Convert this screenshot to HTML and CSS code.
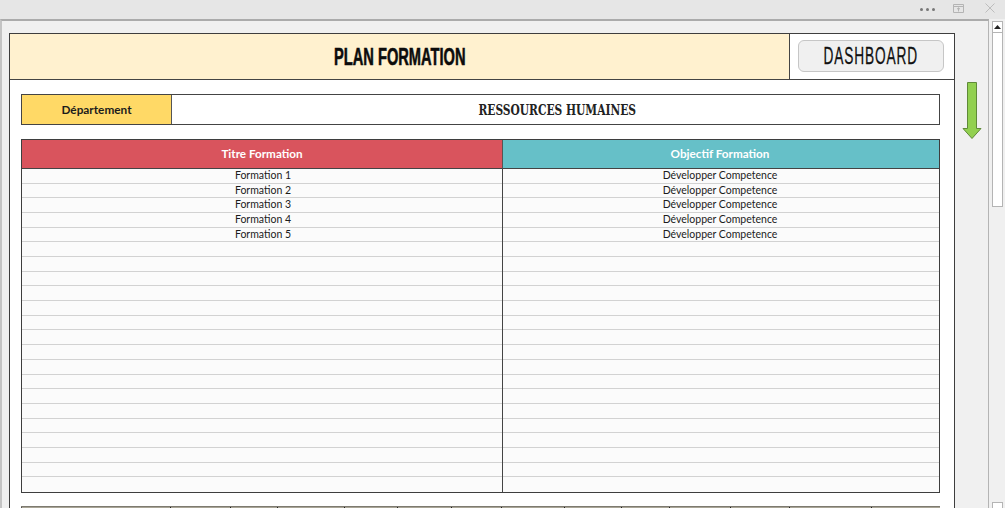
FILE: index.html
```html
<!DOCTYPE html>
<html lang="fr">
<head>
<meta charset="utf-8">
<title>Plan Formation</title>
<link rel="stylesheet" href="styles.css">
</head>
<body>
<header class="titlebar">
  <span class="dots"><i></i><i></i><i></i></span>
  <svg class="win-icon" width="11" height="9" viewBox="0 0 11 9"><path d="M.5.5h10v8H.5zM.5 2.5h10M5.5 7.5V4M4 5.2l1.5-1.4L7 5.2" fill="none" stroke="#b4b4b4"/></svg>
  <svg class="win-close" width="10" height="10" viewBox="0 0 10 10"><path d="M.5.5l9 9M9.5.5l-9 9" fill="none" stroke="#bdbdbd"/></svg>
</header>
<div class="main">
  <div class="pane">
    <section class="sheet">
      <div class="sheet-head">
        <h1 class="sheet-title"><span class="title-text">PLAN FORMATION</span></h1>
        <div class="sheet-action"><button class="dash-btn" type="button"><span class="dash-text">DASHBOARD</span></button></div>
      </div>
      <div class="sheet-body">
        <div class="dept">
          <div class="dept-label">Département</div>
          <div class="dept-value"><span class="dept-text">RESSOURCES HUMAINES</span></div>
        </div>
        <div class="table">
          <div class="th th-red">Titre Formation</div>
          <div class="th th-teal">Objectif Formation</div>
          <div class="col col-left">
            <div class="row">Formation 1</div><div class="row">Formation 2</div><div class="row">Formation 3</div><div class="row">Formation 4</div><div class="row">Formation 5</div>
            <div class="row"></div><div class="row"></div><div class="row"></div><div class="row"></div><div class="row"></div><div class="row"></div><div class="row"></div><div class="row"></div><div class="row"></div><div class="row"></div><div class="row"></div><div class="row"></div><div class="row"></div><div class="row"></div><div class="row"></div><div class="row"></div><div class="row"></div>
          </div>
          <div class="col col-right">
            <div class="row">Développer Competence</div><div class="row">Développer Competence</div><div class="row">Développer Competence</div><div class="row">Développer Competence</div><div class="row">Développer Competence</div>
            <div class="row"></div><div class="row"></div><div class="row"></div><div class="row"></div><div class="row"></div><div class="row"></div><div class="row"></div><div class="row"></div><div class="row"></div><div class="row"></div><div class="row"></div><div class="row"></div><div class="row"></div><div class="row"></div><div class="row"></div><div class="row"></div><div class="row"></div>
          </div>
        </div>
        <div class="next-table">
          <i></i><i></i><i></i><i></i><i></i><i></i><i></i><i></i><i></i><i></i><i></i><i></i><i></i><i></i>
        </div>
      </div>
    </section>
    <div class="gutter">
      <svg class="arrow" width="20" height="58" viewBox="0 0 20 58"><path d="M5.5.5h9v46h4.5L10 56.5 1 46.5h4.5z" fill="#92d050" stroke="#5f8a38"/></svg>
    </div>
  </div>
  <aside class="scrollbar">
    <div class="sb-btn"><svg width="7" height="4" viewBox="0 0 7 4"><path d="M3.5 0L7 4H0z" fill="#222"/></svg></div>
    <div class="sb-thumb"></div>
    <div class="sb-track"></div>
    <div class="sb-btn sb-btn-end"></div>
  </aside>
</div>
</body>
</html>
```
FILE: styles.css
```css
* { box-sizing: border-box; }
html, body { margin: 0; height: 508px; overflow: hidden; }
body { width: 1005px; display: flex; flex-direction: column; background: #f0f0f0; font-family: Lato, "Open Sans", sans-serif; color: #1c1c1c; }

.titlebar { height: 19px; flex: none; background: #e6e6e6; display: flex; align-items: flex-start; }
.dots { display: flex; gap: 3px; margin: 8px 0 0 920px; }
.dots i { width: 3px; height: 3px; border-radius: 50%; background: #777; }
.win-icon { margin: 4px 0 0 18px; }
.win-close { margin: 3px 0 0 21px; }

.main { flex: 1; min-height: 0; display: flex; }
.pane { width: 989px; flex: none; display: flex; align-items: flex-start; border-top: 2px solid #ababab; border-left: 2px solid #c4c4c4; border-right: 1px solid #b4b4b4; padding: 12px 0 0 7px; background: #f0f0f0; }

.sheet { width: 946px; flex: none; background: #fff; border: 1px solid #3e3e3e; border-bottom: 0; }
.sheet-head { height: 46px; display: flex; border-bottom: 1px solid #444; }
.sheet-title { flex: 1; margin: 0; background: #fff1cf; border-right: 1px solid #444; text-align: center; font: bold 24px/46px "Liberation Sans", sans-serif; color: #0c0c0c; }
.title-text { display: inline-block; transform: scaleX(.61); -webkit-text-stroke: .6px #0c0c0c; white-space: nowrap; }
.sheet-action { width: 164px; flex: none; padding: 6px 10px 7px 8px; }
.dash-btn { width: 100%; height: 100%; padding: 0; display: flex; align-items: center; justify-content: center; background: #f0f0f0; border: 1px solid #c6c6c6; border-radius: 6px; font: 24px/1 "Liberation Sans", sans-serif; letter-spacing: 1.5px; color: #111; overflow: hidden; }
.dash-text { flex: none; display: block; transform: scaleX(.57); -webkit-text-stroke: .3px #111; white-space: nowrap; }

.sheet-body { padding: 14px 14px 0 11px; }
.dept { height: 31px; display: flex; border: 1px solid #444; }
.dept-label { width: 150px; flex: none; background: #ffd966; border-right: 1px solid #555; text-align: center; font-size: 11.8px; font-weight: 700; line-height: 29px; }
.dept-value { flex: 1; text-align: center; padding-left: 4px; font: bold 14.5px/29px "DejaVu Serif", "Liberation Serif", serif; color: #222; }
.dept-text { display: inline-block; transform: scaleX(.735); white-space: nowrap; }

.table { margin-top: 14px; height: 354px; display: grid; grid-template-columns: 481px 1fr; grid-template-rows: 29px 1fr; border: 1px solid #3e3e3e; }
.th { border-bottom: 1px solid #444; color: #fff; text-align: center; font-size: 11.7px; font-weight: 700; line-height: 27px; }
.th-red { background: #d9545d; border-right: 1px solid #555; }
.th-teal { background: #66c0c8; padding-right: 2px; }
.col { display: grid; grid-template-rows: repeat(22, 1fr); background: #fbfbfb; min-height: 0; }
.col-left { border-right: 1px solid #444; }
.row { border-bottom: 1px solid #d2d2d2; text-align: center; font-size: 10.5px; line-height: 13px; overflow: hidden; }
.col-left .row { padding-left: 2px; }
.col-right .row { padding-right: 2px; }
.row:last-child { border-bottom: 0; }

.next-table { margin-top: 13px; height: 4px; display: grid; grid-template-columns: 149px 60px 47px 67px 53px 54px 50px 63px 57px 48px 61px 59px 82px 1fr; border-top: 1px solid #7d7a70; background: #a9a596; }
.next-table i { border-left: 1px solid #222; }
.next-table i:first-child { border-left: 1px solid #555; }

.gutter { flex: 1; padding: 49px 0 0 7px; }
.arrow { display: block; }

.scrollbar { flex: 1; display: flex; flex-direction: column; padding: 2px 2px 0 3px; background: #f0f0f0; }
.sb-btn { height: 12px; flex: none; background: #fff; border: 1px solid #b4b4b4; display: flex; align-items: center; justify-content: center; }
.sb-thumb { height: 174px; flex: none; background: #fff; border: 1px solid #b4b4b4; border-top: 0; }
.sb-track { flex: 1; }
.sb-btn-end { height: 8px; margin-bottom: -2px; }
```
